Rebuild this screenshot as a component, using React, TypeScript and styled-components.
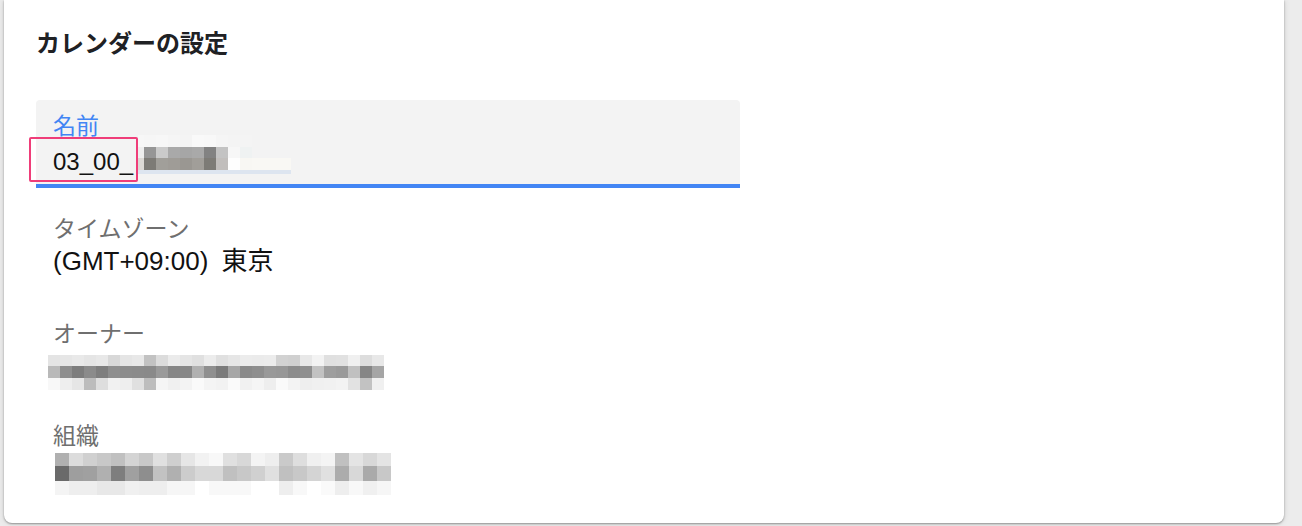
import React from "react";
import styled, { createGlobalStyle } from "styled-components";

const GlobalStyle = createGlobalStyle`
  html, body { margin: 0; padding: 0; background: #ececec; overflow: hidden; }
  body { font-family: "Liberation Sans", "Noto Sans CJK JP", sans-serif; }
`;

const Page = styled.div`
  width: 1302px;
  height: 526px;
  box-sizing: border-box;
  padding: 0 18px 0 4px;
`;

const Card = styled.div`
  height: 523px;
  box-sizing: border-box;
  background: #fff;
  border-radius: 0 0 8px 8px;
  box-shadow: 0 1px 2px rgba(0, 0, 0, 0.35), 0 0 6px rgba(0, 0, 0, 0.12);
  padding: 27px 32px 0 32px;
`;

const Title = styled.h1`
  margin: 0;
  font-family: "Noto Sans CJK JP", sans-serif;
  font-size: 24px;
  line-height: 30px;
  font-weight: 700;
  color: #202124;
`;

const Field = styled.div`
  position: relative;
  margin-top: 43px;
  width: 704px;
  height: 88px;
  box-sizing: border-box;
  background: #f3f3f3;
  border-radius: 4px 4px 0 0;
  border-bottom: 4px solid #4285f4;
  padding: 10px 17px 0;
`;

const Section = styled.div<{ $top: number }>`
  margin-top: ${(p) => p.$top}px;
  padding: 0 17px;
`;

const Label = styled.div<{ $active?: boolean }>`
  font-family: "Noto Sans CJK JP", sans-serif;
  font-size: 23px;
  line-height: 28px;
  color: ${(p) => (p.$active ? "#4285f4" : "#6f6f6f")};
`;

const Value = styled.div`
  font-family: "Liberation Sans", "Noto Sans CJK JP", sans-serif;
  font-size: 26px;
  line-height: 30px;
  word-spacing: 6px;
  color: #111;
  margin-top: 5px;
`;

const ValueRow = styled.div`
  display: flex;
  align-items: flex-start;
  margin-top: 9px;
`;

const ValueText = styled.span`
  font-family: "Liberation Sans", "Noto Sans CJK JP", sans-serif;
  font-size: 24px;
  line-height: 30px;
  color: #111;
`;

const NameBlur = styled.svg`
  display: block;
  margin: -12px 0 0 5px;
`;

const Redacted = styled.svg<{ $top: number; $left: number }>`
  display: block;
  margin-top: ${(p) => p.$top}px;
  margin-left: ${(p) => p.$left}px;
`;

const Highlight = styled.div`
  position: absolute;
  left: -7px;
  top: 37px;
  width: 109px;
  height: 45px;
  box-sizing: border-box;
  border: 2px solid #ef3d79;
  border-radius: 2px;
  pointer-events: none;
`;

type MosaicProps = {
  widths: number[];
  heights: number[];
  colors: string[][];
};

function mosaicRects({ widths, heights, colors }: MosaicProps) {
  const rects: React.ReactNode[] = [];
  let y = 0;
  heights.forEach((h, r) => {
    let x = 0;
    widths.forEach((w, c) => {
      const fill = colors[r][c] ?? "transparent";
      rects.push(<rect key={`${r}-${c}`} x={x} y={y} width={w} height={h} fill={fill} />);
      x += w;
    });
    y += h;
  });
  return rects;
}

const sum = (a: number[]) => a.reduce((s, v) => s + v, 0);

const nameMosaic: MosaicProps = {
  widths: [6, 12, 12, 12, 12, 12, 12, 12, 12, 12, 12, 12, 15],
  heights: [12, 11, 12, 4],
  colors: [
    ["#f7f7f7", "#f6f6f6", "#f7f7f7", "#f5f5f5", "#f4f4f4", "#f9f9f9", "#f8f8f8", "#f5f5f5", "#f4f4f4", "#f4f4f4", "#f3f3f3", "#f3f3f3", "#f3f3f3"],
    ["#eeeeee", "#969696", "#cacaca", "#a9a9a9", "#a6a6a6", "#a9a9a9", "#828282", "#c3c3c3", "#f7f7f7", "#eff2f2", "#f3f3f3", "#f3f3f3", "#f3f3f3"],
    ["#dcd9d5", "#7d7b76", "#a19f9a", "#9f9c97", "#9a9792", "#a19e99", "#7d7b76", "#c1bebc", "#fefefe", "#f8f7f3", "#f9f8f4", "#f9f8f4", "#f9f8f4"],
    ["#dde5f0", "#dde5f0", "#dde5f0", "#dde5f0", "#dde5f0", "#dde5f0", "#dde5f0", "#dde5f0", "#dde5f0", "#dde5f0", "#dde5f0", "#dde5f0", "#dde5f0"],
  ],
};

const g = (v: string) => `#${v}${v}${v}`;

const ownerMosaic: MosaicProps = {
  widths: Array(28).fill(12),
  heights: [11, 12, 12],
  colors: [
    ["e4", "e6", "e9", "e5", "e8", "d8", "e5", "e8", "c2", "dc", "eb", "e5", "e0", "ec", "e0", "e6", "ec", "eb", "ec", "d2", "d0", "e8", "f3", "e0", "e1", "f0", "dd", "e8"].map(g),
    ["b9", "8e", "7d", "8b", "7e", "8e", "8c", "8b", "8a", "9a", "86", "87", "b0", "8f", "7b", "a6", "8a", "8e", "99", "97", "8c", "8f", "c2", "9e", "9a", "c0", "86", "a5"].map(g),
    ["f8", "ee", "e6", "bc", "de", "f1", "ee", "e0", "bd", "f5", "f0", "f3", "fa", "f4", "f2", "fa", "f1", "f5", "ee", "fa", "f3", "ee", "f0", "f1", "f3", "e2", "c2", "f0"].map(g),
  ],
};

const orgMosaic: MosaicProps = {
  widths: Array(24).fill(14),
  heights: [13, 15, 14],
  colors: [
    ["b0", "dc", "d0", "c8", "c0", "d4", "c8", "e0", "cf", "e6", "f2", "f8", "e0", "d8", "f4", "ee", "ca", "de", "f0", "f4", "c0", "e4", "d8", "e4"].map(g),
    ["6a", "9e", "a0", "b0", "7e", "a0", "8e", "c2", "b0", "cc", "d8", "d8", "c0", "c8", "d0", "e0", "c0", "c8", "d4", "e0", "ac", "d8", "aa", "c8"].map(g),
    ["f4", "ee", "ee", "e8", "e8", "f0", "ee", "ee", "f6", "f6", "ff", "f8", "f8", "f8", "ff", "ff", "ee", "f8", "ff", "fa", "ee", "f8", "f0", "f6"].map(g),
  ],
};

function Mosaic({ data, as: Comp, ...rest }: { data: MosaicProps; as: any; [k: string]: any }) {
  const w = sum(data.widths);
  const h = sum(data.heights);
  return (
    <Comp width={w} height={h} viewBox={`0 0 ${w} ${h}`} shapeRendering="crispEdges" {...rest}>
      {mosaicRects(data)}
    </Comp>
  );
}

export default function App() {
  return (
    <>
      <GlobalStyle />
      <Page>
        <Card>
          <Title>カレンダーの設定</Title>
          <Field>
            <Label $active>名前</Label>
            <ValueRow>
              <ValueText>03_00_</ValueText>
              <Mosaic data={nameMosaic} as={NameBlur} />
            </ValueRow>
            <Highlight />
          </Field>
          <Section $top={25}>
            <Label>タイムゾーン</Label>
            <Value>(GMT+09:00) 東京</Value>
          </Section>
          <Section $top={42}>
            <Label>オーナー</Label>
            <Mosaic data={ownerMosaic} as={Redacted} $top={9} $left={-5} />
          </Section>
          <Section $top={30}>
            <Label>組織</Label>
            <Mosaic data={orgMosaic} as={Redacted} $top={5} $left={2} />
          </Section>
        </Card>
      </Page>
    </>
  );
}
